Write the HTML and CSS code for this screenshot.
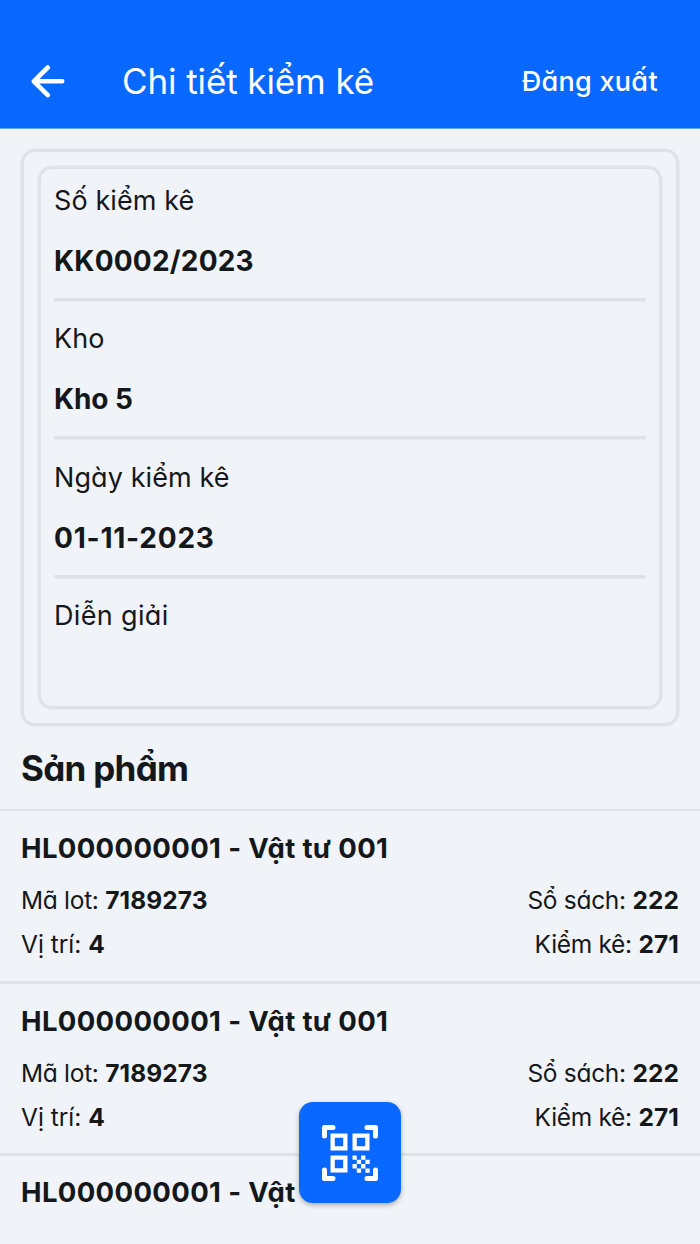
FILE: index.html
```html
<!DOCTYPE html>
<html lang="vi">
<head>
<meta charset="utf-8">
<title>Chi tiết kiểm kê</title>
<link rel="stylesheet" href="styles.css">
</head>
<body>
<div class="screen">
  <header class="appbar">
    <svg class="back" width="36" height="36" viewBox="0 0 36 36"><path d="M32.200 17.300H4M17.800 3.500L3.800 17.300L17.800 31.200" fill="none" stroke="#fff" stroke-width="4.600" stroke-linecap="round" stroke-linejoin="round"/></svg>
    <h1 class="title">Chi tiết kiểm kê</h1>
    <span class="logout">Đăng xuất</span>
  </header>
  <main>
    <section class="card">
      <div class="card-inner">
        <div class="field"><div class="label">Số kiểm kê</div><div class="value v-number">KK0002/2023</div></div>
        <div class="field"><div class="label">Kho</div><div class="value v-store">Kho 5</div></div>
        <div class="field"><div class="label">Ngày kiểm kê</div><div class="value v-date">01-11-2023</div></div>
        <div class="field last"><div class="label l-note">Diễn giải</div></div>
      </div>
    </section>
    <h2 class="heading">Sản phẩm</h2>
    <div class="list">
      <article class="item">
        <h3 class="name">HL000000001 - Vật tư 001</h3>
        <div class="row"><span>Mã lot: <b>7189273</b></span><span>Sổ sách: <b>222</b></span></div>
        <div class="row"><span class="place">Vị trí: <b>4</b></span><span>Kiểm kê: <b>271</b></span></div>
      </article>
      <article class="item">
        <h3 class="name">HL000000001 - Vật tư 001</h3>
        <div class="row"><span>Mã lot: <b>7189273</b></span><span>Sổ sách: <b>222</b></span></div>
        <div class="row"><span class="place">Vị trí: <b>4</b></span><span>Kiểm kê: <b>271</b></span></div>
      </article>
      <article class="item">
        <h3 class="name">HL000000001 - Vật tư 001</h3>
      </article>
    </div>
  </main>
  <button class="fab" aria-label="Quét mã QR">
    <svg width="58" height="58" viewBox="0 0 58 58">
      <g fill="none" stroke="#fff" stroke-width="5" stroke-linecap="round" stroke-linejoin="round">
        <path d="M3.500 12V3.500H12M46 3.500H54.500V12M3.500 46V54.500H12M46 54.500H54.500V46"/>
      </g>
      <g fill="none" stroke="#fff" stroke-width="4.300">
        <path d="M11.650 11.650H24.350V24.350H11.650ZM33.650 11.650H46.350V24.350H33.650ZM11.650 33.650H24.350V46.350H11.650Z"/>
      </g>
      <path fill="#fff" d="M31.500 31.500h4.300v4.300h-4.300zM40.100 31.500h4.300v4.300h-4.300zM35.800 35.800h4.300v4.300h-4.300zM44.400 35.800h4.300v4.300h-4.300zM31.500 40.100h4.300v4.300h-4.300zM40.100 40.100h4.300v4.300h-4.300zM35.800 44.400h4.300v4.300h-4.300zM44.400 44.400h4.300v4.300h-4.300z"/>
    </svg>
  </button>
</div>
</body>
</html>
```
FILE: styles.css
```css
* { box-sizing: border-box; }
body { margin: 0; background: #f0f3f8; }
.screen {
  position: relative;
  width: 700px;
  height: 1244px;
  overflow: hidden;
  background: #f0f3f8;
  color: #14181b;
  font-family: Inter, "Noto Sans", sans-serif;
  font-feature-settings: "cv11" 1, "calt" 0;
  white-space: nowrap;
}
h1, h2, h3 { margin: 0; }
.appbar {
  display: flex;
  align-items: center;
  height: 128px;
  padding: 36px 42px 0 30px;
  background: #0868ff;
  color: #fff;
  box-shadow: 0 1px 0 #6aa3fb;
}
.title { margin: 0 0 2px 56px; font-size: 35px; line-height: 44px; font-weight: 430; letter-spacing: -.1px; }
.logout { margin-left: auto; font-size: 27px; font-weight: 550; line-height: 34px; letter-spacing: .25px; }
.card {
  margin: 21px 21px 0;
  height: 577px;
  padding: 14px;
  border: 3px solid #dfe3e7;
  border-radius: 14px;
  box-shadow: 0 0 0 .5px #dfe3e7;
}
.card-inner {
  height: 543px;
  padding: 14px 13px 0;
  border: 3px solid #dfe3e7;
  border-radius: 14px;
  box-shadow: 0 0 0 .5px #dfe3e7;
}
.field { height: 138.67px; border-bottom: 3px solid #dfe3e7; box-shadow: 0 .5px 0 #dfe3e7; }
.field:first-child { height: 117.5px; }
.field:not(:first-child) { padding-top: 20.5px; }
.field.last { border: 0; box-shadow: none; }
.label { font-size: 27px; line-height: 36px; letter-spacing: .1px; }
.l-note { letter-spacing: .35px; }
.value { margin-top: 24px; font-size: 28px; line-height: 36px; font-weight: 700; }
.v-number { letter-spacing: .2px; }
.v-store { letter-spacing: -.1px; }
.v-date { letter-spacing: .78px; }
.heading { margin: 19px 21px 0; height: 64px; font-size: 35px; line-height: 46px; font-weight: 700; letter-spacing: -.7px; }
.list { border-top: 2px solid #dfe3e7; }
.item { height: 172.3px; padding: 18px 21px 0; border-bottom: 3px solid #dfe3e7; box-shadow: 0 -.5px 0 #dfe3e7; }
.item:first-child { height: 172.6px; box-shadow: none; }
.item:last-child { padding-top: 17px; }
.name { font-size: 27.5px; line-height: 38px; font-weight: 650; letter-spacing: .36px; }
.row { display: flex; justify-content: space-between; height: 44px; font-size: 24.5px; line-height: 44px; }
.row span { letter-spacing: -.3px; }
.row .place { letter-spacing: 0; }
.row b { letter-spacing: .1px; }
.name + .row { margin-top: 11px; }
.fab {
  position: absolute;
  left: 299px;
  top: 1102px;
  width: 102px;
  height: 101px;
  display: grid;
  place-items: center;
  padding: 0;
  border: 0;
  border-radius: 14px;
  background: #0868ff;
  box-shadow: 0 2px 5px rgba(0, 0, 0, .3);
}
```
